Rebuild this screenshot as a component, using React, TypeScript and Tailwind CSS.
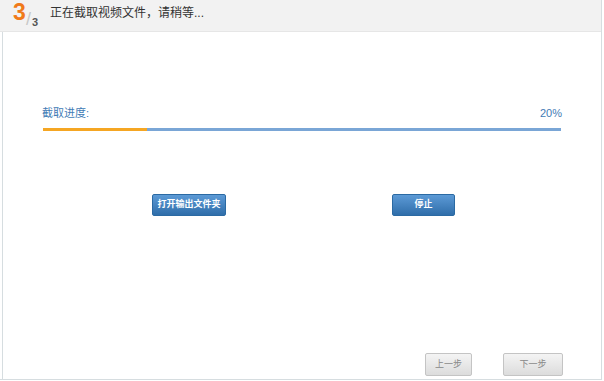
import React from 'react';

const font = { fontFamily: '"Liberation Sans", "Noto Sans CJK SC", sans-serif' };

const App: React.FC = () => {
  const progress = 20;

  return (
    <div className="w-[604px] h-[381px] bg-white overflow-hidden" style={font}>
      <div className="w-[602px] h-[380px] flex flex-col border-r border-b border-[#d6dde0]">
        {/* Header */}
        <div className="h-[32px] bg-[#f2f2f2] flex items-start pl-[12px] border-b border-[#e6e6e6]">
          <div className="relative w-[32px] h-[32px]">
            <span className="absolute left-[1px] top-[1px] text-[23px] font-bold text-[#f07a1a] leading-none">3</span>
            <span className="absolute left-[14px] top-[10px] text-[18px] text-[#c8c8c8] leading-none font-light">/</span>
            <span className="absolute left-[20px] top-[17px] text-[11px] font-bold text-[#555] leading-none">3</span>
          </div>
          <span className="ml-[6px] mt-[4px] text-[12px] text-[#333]">正在截取视频文件，请稍等...</span>
        </div>

        {/* Body */}
        <div className="flex-1 flex flex-col ml-[2px] border-l border-[#d6dde0]">
          <div className="mt-[73px] mx-[39px] flex justify-between text-[11px] text-[#3f7bb5]">
            <span>截取进度:</span>
            <span>20%</span>
          </div>
          <div className="mt-[6px] mx-[40px] h-[3px] bg-[#7aa6d6] flex">
            <div className="h-full bg-[#f5a623]" style={{ width: `${progress}%` }} />
          </div>

          <div className="mt-[63px] flex">
            <button className="ml-[149px] w-[74px] h-[22px] rounded-[2px] border border-[#2b6aa3] bg-gradient-to-b from-[#5c9ad6] to-[#2f6eaa] text-white text-[9px] font-bold">
              打开输出文件夹
            </button>
            <button className="ml-[166px] w-[63px] h-[22px] rounded-[2px] border border-[#2b6aa3] bg-gradient-to-b from-[#5c9ad6] to-[#2f6eaa] text-white text-[9px] font-bold">
              停止
            </button>
          </div>

          <div className="mt-auto mb-[3px] flex justify-end gap-[31px] mr-[38px]">
            <button className="w-[47px] h-[23px] rounded-[2px] border border-[#c4c4c4] bg-gradient-to-b from-[#f4f4f4] to-[#dcdcdc] text-[#888] text-[9px]">
              上一步
            </button>
            <button className="w-[60px] h-[23px] rounded-[2px] border border-[#c4c4c4] bg-gradient-to-b from-[#f4f4f4] to-[#dcdcdc] text-[#888] text-[9px]">
              下一步
            </button>
          </div>
        </div>
      </div>
    </div>
  );
};

export default App;
